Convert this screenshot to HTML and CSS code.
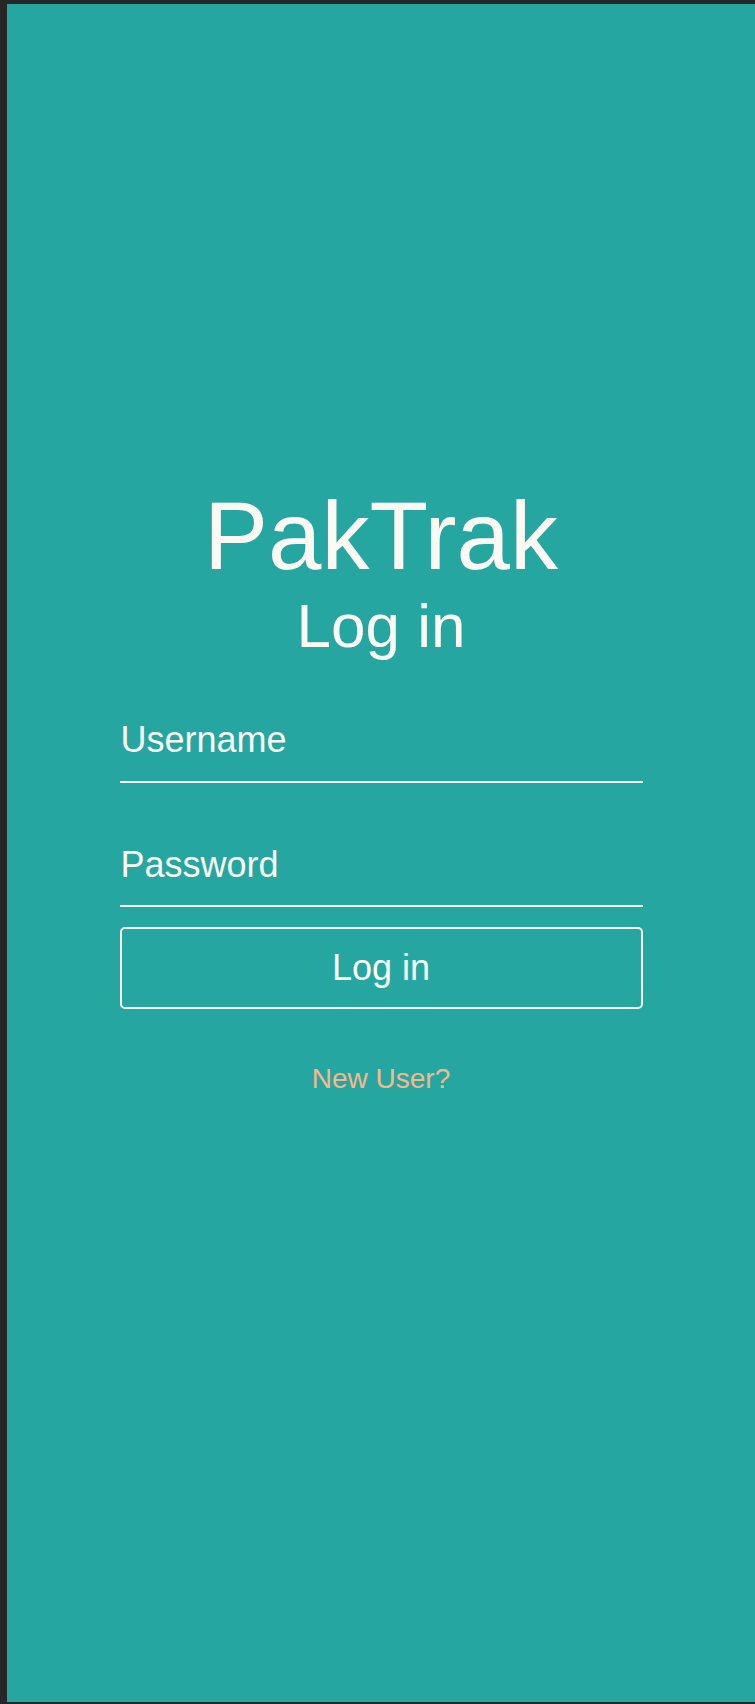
FILE: index.html
```html
<!DOCTYPE html>
<html lang="en">
<head>
<meta charset="utf-8">
<title>PakTrak - Log in</title>
<link rel="stylesheet" href="styles.css">
</head>
<body>
<main class="screen">
  <h1 class="brand">PakTrak</h1>
  <h2 class="heading">Log in</h2>
  <form class="login-form">
    <input class="field" type="text" placeholder="Username">
    <input class="field field-second" type="password" placeholder="Password">
    <button class="submit" type="button">Log in</button>
  </form>
  <a class="new-user" href="#">New User?</a>
</main>
</body>
</html>
```

FILE: styles.css
```css
html, body {
  margin: 0;
  padding: 0;
}

body {
  background: #262626;
  padding: 4px 0 2px 7px;
  font-family: "Liberation Sans", Arial, sans-serif;
}

.screen {
  box-sizing: border-box;
  height: 1698px;
  background: #26a6a1;
  display: flex;
  flex-direction: column;
  align-items: center;
  padding-top: 484px;
  color: #fbf9f1;
}

.brand {
  margin: 0;
  font-size: 96px;
  line-height: 96px;
  font-weight: normal;
}

.heading {
  margin: 11px 0 0;
  font-size: 62px;
  line-height: 62px;
  font-weight: normal;
}

.login-form {
  margin-top: 45px;
  width: 523px;
  display: flex;
  flex-direction: column;
}

.field {
  box-sizing: border-box;
  width: 100%;
  height: 80.5px;
  margin: 0;
  padding: 20px 0 22.5px 1px;
  border: 0;
  border-bottom: 2px solid #fbf9f1;
  background: transparent;
  color: #fbf9f1;
  font-family: "Liberation Sans", Arial, sans-serif;
  font-size: 36px;
  line-height: 36px;
  outline: none;
}

.field::placeholder {
  color: #fbf9f1;
  opacity: 1;
}

.field-second {
  margin-top: 44px;
}

.submit {
  box-sizing: border-box;
  margin-top: 20px;
  width: 100%;
  height: 82px;
  border: 2px solid #fbf9f1;
  border-radius: 5px;
  background: transparent;
  color: #fbf9f1;
  font-family: "Liberation Sans", Arial, sans-serif;
  font-size: 36px;
  line-height: 36px;
  padding: 0;
}

.new-user {
  margin-top: 56px;
  font-size: 28px;
  line-height: 28px;
  color: #f7b889;
  text-decoration: none;
}
```
